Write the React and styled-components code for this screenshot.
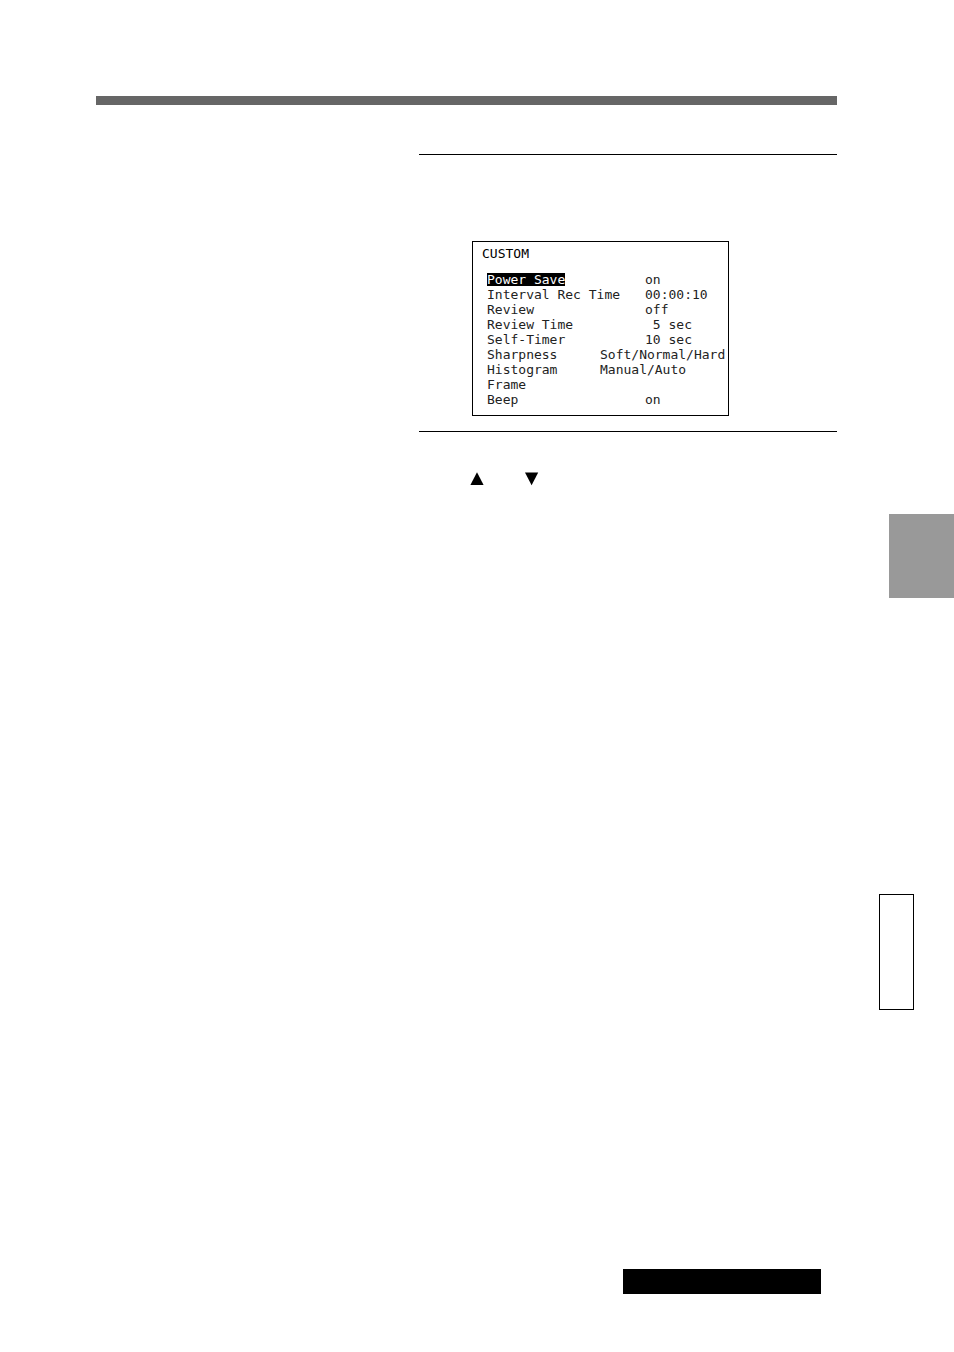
import React from 'react';
import styled, {createGlobalStyle} from "styled-components";

const GlobalStyle = createGlobalStyle`
  * {
    box-sizing: border-box;
  }

  body {
    margin: 0;
    background-color: #fff;
    color: #000;
    font-family: "DejaVu Sans Mono", monospace;
  }
`

const Page = styled.div`
  display: grid;
  grid-template-columns: minmax(0, 1fr) 75px;
  column-gap: 42px;
  min-height: 100vh;
  padding: 96px 0 58px 96px;
`

const Main = styled.main`
  display: flex;
  flex-direction: column;
`

const TopBar = styled.div`
  height: 9px;
  margin-bottom: 49px;
  background-color: #666;
`

const Step = styled.section`
  margin-left: 323px;
  padding: ${({$pad}) => $pad};
  border-top: 1px solid #000;
`

const Screen = styled.div`
  width: 257px;
  padding: 4px 0 8px 9px;
  border: 1px solid #000;
`

const Title = styled.h1`
  margin: 0 0 11px;
  font-size: 13px;
  line-height: 15px;
  font-weight: 400;
`

const Menu = styled.table`
  width: 100%;
  margin-left: 5px;
  table-layout: fixed;
  border-collapse: collapse;
  font-size: 13px;
  line-height: 13px;
  color: #222;
`

const Name = styled.th`
  width: 113px;
  height: 15px;
  padding: 0;
  font-weight: 400;
  text-align: left;
  white-space: nowrap;
`

const Value = styled.td`
  padding: 0 0 0 ${({$wide}) => $wide ? '0' : '45px'};
  white-space: pre;
`

const Label = styled.span`
  display: inline-block;
  background-color: ${({$selected}) => $selected ? '#000' : 'transparent'};
  color: ${({$selected}) => $selected ? '#fff' : 'inherit'};
`

const Arrows = styled.div`
  display: flex;
  gap: 41px;
`

const Arrow = styled.svg`
  width: 14px;
  height: 14px;
  fill: #000;
`

const Footer = styled.footer`
  width: 198px;
  height: 25px;
  margin: auto 16px 0 auto;
  background-color: #000;
`

const Side = styled.aside`
  display: flex;
  flex-direction: column;
  padding-top: 418px;
`

const Tab = styled.div`
  height: 84px;
  margin: 0 0 296px 10px;
  background-color: #999;
`

const SideBox = styled.div`
  width: 35px;
  height: 116px;
  border: 1px solid #000;
`

const items = [
    {name: 'Power Save', value: 'on', selected: true},
    {name: 'Interval Rec Time', value: '00:00:10'},
    {name: 'Review', value: 'off'},
    {name: 'Review Time', value: ' 5 sec'},
    {name: 'Self-Timer', value: '10 sec'},
    {name: 'Sharpness', value: 'Soft/Normal/Hard', wide: true},
    {name: 'Histogram', value: 'Manual/Auto', wide: true},
    {name: 'Frame', value: ''},
    {name: 'Beep', value: 'on'},
]

const App = () => {
    return (
        <>
            <GlobalStyle/>
            <Page>
                <Main>
                    <TopBar/>
                    <Step $pad="86px 0 15px 53px">
                        <Screen>
                            <Title>CUSTOM</Title>
                            <Menu>
                                <tbody>
                                {items.map(item => (
                                    <tr key={item.name}>
                                        <Name scope="row"><Label $selected={item.selected}>{item.name}</Label></Name>
                                        <Value $wide={item.wide}>{item.value}</Value>
                                    </tr>
                                ))}
                                </tbody>
                            </Menu>
                        </Screen>
                    </Step>
                    <Step $pad="40px 0 0 51px">
                        <Arrows>
                            <Arrow viewBox="0 0 14 14"><path d="M7 0.3L13.6 13H0.4Z"/></Arrow>
                            <Arrow viewBox="0 0 14 14"><path d="M0 0.4H13.2L6.6 13.2Z"/></Arrow>
                        </Arrows>
                    </Step>
                    <Footer/>
                </Main>
                <Side>
                    <Tab/>
                    <SideBox/>
                </Side>
            </Page>
        </>
    );
};

export default App;
